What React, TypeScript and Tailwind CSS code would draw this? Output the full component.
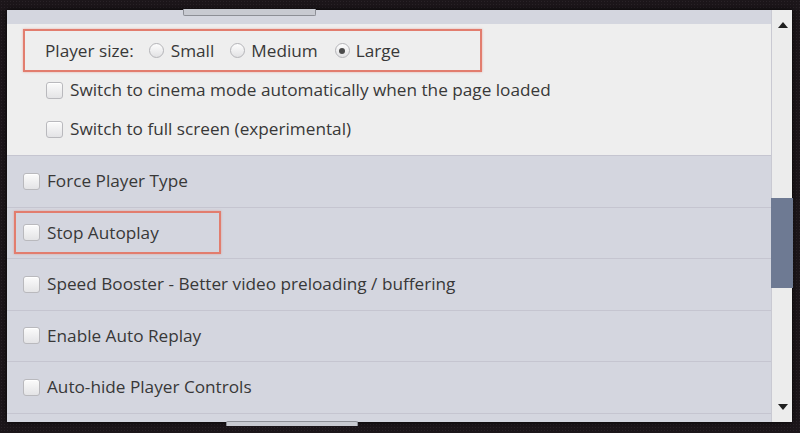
import type { ReactNode } from "react";

function Checkbox() {
  return (
    <span className="h-[17px] w-[17px] shrink-0 rounded-[3px] border border-[#b9b9bd] bg-gradient-to-b from-[#fbfbfb] to-[#e4e4e6] shadow-[inset_0_1px_0_#fff]" />
  );
}

function Radio({ checked = false }: { checked?: boolean }) {
  return (
    <span className="grid h-[15px] w-[15px] shrink-0 place-items-center rounded-full border border-[#b4b4b8] bg-gradient-to-b from-[#fdfdfd] to-[#e2e2e4]">
      {checked ? <span className="h-[6px] w-[6px] rounded-full bg-[#4a4a4a]" /> : null}
    </span>
  );
}

function Row({ children }: { children: ReactNode }) {
  return (
    <div className="flex h-[51.5px] items-center border-b border-[#c5c5d0] pl-[16px]">
      {children}
    </div>
  );
}

export default function App() {
  const rows = [
    "Force Player Type",
    "Stop Autoplay",
    "Speed Booster - Better video preloading / buffering",
    "Enable Auto Replay",
    "Auto-hide Player Controls",
  ];

  return (
    <div
      className="relative h-[433px] w-[800px] overflow-hidden bg-[#1c161a] bg-[radial-gradient(#2a2328_1px,transparent_1px)] bg-[length:3px_3px] pb-[11px] pl-[7px] pr-[8px] pt-[10px] text-[17.2px] leading-[24px] text-[#383838]"
      style={{ fontFamily: '"Open Sans", "Noto Sans", sans-serif' }}
    >
      <div className="flex h-[412px] shadow-[0_0_6px_rgba(0,0,0,0.8)]">
        <div className="flex min-w-0 flex-1 flex-col bg-[#d4d6df]">
          <div className="h-[14px] shrink-0 bg-[#d4d6df]" />

          <div className="h-[132px] shrink-0 border-b border-[#c5c5d0] bg-[#eeeeee] pl-[16px] pt-[5px]">
            <div className="flex h-[43px] w-[459px] items-center border-2 border-[#e27d6e] pl-[20px] shadow-[0_0_2px_rgba(226,125,110,0.6)]">
              <span>Player size:</span>
              <span className="ml-[15px] flex items-center gap-[7px]">
                <Radio />
                Small
              </span>
              <span className="ml-[16px] flex items-center gap-[6px]">
                <Radio />
                Medium
              </span>
              <span className="ml-[17px] flex items-center gap-[6px]">
                <Radio checked />
                Large
              </span>
            </div>
            <div className="mt-[6px] flex items-center gap-[7px] pl-[23px]">
              <Checkbox />
              <span>Switch to cinema mode automatically when the page loaded</span>
            </div>
            <div className="mt-[15px] flex items-center gap-[7px] pl-[23px]">
              <Checkbox />
              <span>Switch to full screen (experimental)</span>
            </div>
          </div>

          {rows.map((label) =>
            label === "Stop Autoplay" ? (
              <div key={label} className="flex h-[51.5px] items-center border-b border-[#c5c5d0] pl-[7px]">
                <div className="flex h-[43px] w-[207px] items-center gap-[7px] border-2 border-[#e27d6e] pl-[7px] shadow-[0_0_2px_rgba(226,125,110,0.6)]">
                  <Checkbox />
                  <span>{label}</span>
                </div>
              </div>
            ) : (
              <Row key={label}>
                <span className="flex items-center gap-[7px]">
                  <Checkbox />
                  <span>{label}</span>
                </span>
              </Row>
            )
          )}
        </div>

        <div className="flex w-[21px] shrink-0 flex-col items-center border-l border-[#c9c9d2] bg-[#ececec] py-[12px]">
          <svg width="10" height="6" viewBox="0 0 10 6" className="ml-[1px]">
            <path d="M0 6 L5 0 L10 6 Z" fill="#1f1f1f" />
          </svg>
          <div className="mt-[170px] h-[90px] w-[22px] -ml-[1px] bg-[#6e7a93]" />
          <div className="flex-1" />
          <svg width="10" height="6" viewBox="0 0 10 6" className="ml-[1px]">
            <path d="M0 0 L10 0 L5 6 Z" fill="#1f1f1f" />
          </svg>
        </div>
      </div>

      <div className="absolute left-[183px] top-[9px] h-[7px] w-[133px] rounded-b-[2px] border border-t-0 border-[#8d8f96] bg-[#c8cad1]" />
      <div className="absolute left-[226px] top-[421px] h-[5px] w-[132px] rounded-t-[2px] border border-b-0 border-[#8d8f96] bg-[#c8cad1]" />
    </div>
  );
}
